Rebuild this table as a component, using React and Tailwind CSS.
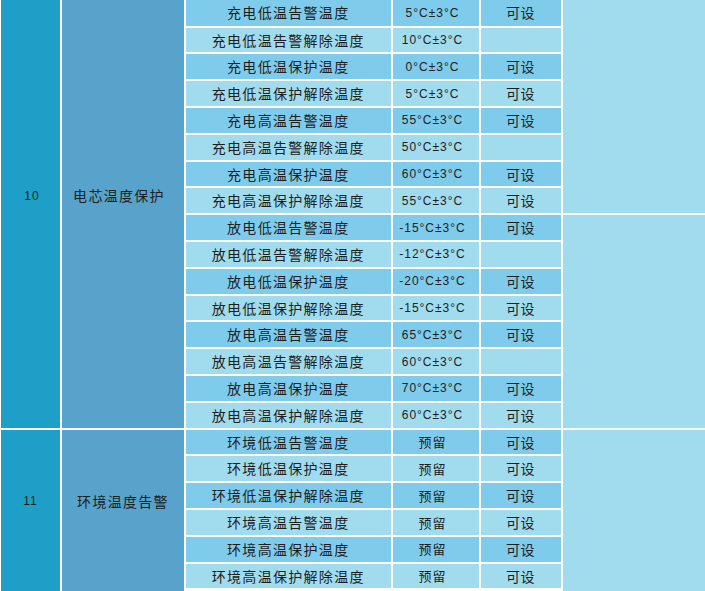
const cjk = "font-['Noto_Sans_CJK_SC','Noto_Sans',sans-serif]";

// parameter rows in display order: name, threshold, settable
const params = [
  ["充电低温告警温度", "5°C±3°C", "可设"],
  ["充电低温告警解除温度", "10°C±3°C", ""],
  ["充电低温保护温度", "0°C±3°C", "可设"],
  ["充电低温保护解除温度", "5°C±3°C", "可设"],
  ["充电高温告警温度", "55°C±3°C", "可设"],
  ["充电高温告警解除温度", "50°C±3°C", ""],
  ["充电高温保护温度", "60°C±3°C", "可设"],
  ["充电高温保护解除温度", "55°C±3°C", "可设"],
  ["放电低温告警温度", "-15°C±3°C", "可设"],
  ["放电低温告警解除温度", "-12°C±3°C", ""],
  ["放电低温保护温度", "-20°C±3°C", "可设"],
  ["放电低温保护解除温度", "-15°C±3°C", "可设"],
  ["放电高温告警温度", "65°C±3°C", "可设"],
  ["放电高温告警解除温度", "60°C±3°C", ""],
  ["放电高温保护温度", "70°C±3°C", "可设"],
  ["放电高温保护解除温度", "60°C±3°C", "可设"],
  ["环境低温告警温度", "预留", "可设"],
  ["环境低温保护温度", "预留", "可设"],
  ["环境低温保护解除温度", "预留", "可设"],
  ["环境高温告警温度", "预留", "可设"],
  ["环境高温保护温度", "预留", "可设"],
  ["环境高温保护解除温度", "预留", "可设"],
];

function ParamRow({ name, value, settable, dark }) {
  const bg = dark ? "bg-[#7fcbeb]" : "bg-[#a1dbee]";
  const isReserved = value === "预留";

  return (
    <>
      <div className={`${bg} ${cjk} flex items-center justify-center text-[14px] tracking-[1.3px] text-[#1d1d1d]`}>
        {name}
      </div>
      <div
        className={
          isReserved
            ? `${bg} ${cjk} flex items-center justify-center pr-[6px] text-[13px] tracking-[1px] text-[#1d1d1d]`
            : `${bg} flex items-center justify-center pr-[6px] font-['Liberation_Sans',Arial,sans-serif] text-[12px] tracking-[1px] text-[#1d1d1d]`
        }
      >
        {value}
      </div>
      <div className={`${bg} ${cjk} flex items-center justify-center text-[14px] tracking-[0.5px] text-[#1d1d1d]`}>
        {settable}
      </div>
    </>
  );
}

export default function App() {
  return (
    <div className="h-[591px] w-[705px] overflow-hidden bg-white pl-[1px]">
      <div className="grid grid-cols-[59px_122px_204.5px_86px_80px_1fr] grid-rows-[25.7px_repeat(22,24.8px)] gap-[2px]">
        <div className="col-start-1 row-[1/17] flex items-center justify-center bg-[#1e9fc7] pb-[36px] pl-[3px] font-['Liberation_Sans',Arial,sans-serif] text-[12px] tracking-[1px] text-[#1d1d1d]">
          10
        </div>
        <div className={`col-start-2 row-[1/17] flex items-center justify-center bg-[#57a3cc] pr-[8px] pb-[36px] ${cjk} text-[14px] tracking-[1.3px] text-[#1d1d1d]`}>
          电芯温度保护
        </div>
        <div className="col-start-6 row-[1/9] bg-[#a1dbee]" />
        <div className="col-start-6 row-[9/17] bg-[#a1dbee]" />

        <div className="col-start-1 row-[17/24] flex items-center justify-center bg-[#1e9fc7] pb-[42px] font-['Liberation_Sans',Arial,sans-serif] text-[12px] tracking-[1px] text-[#1d1d1d]">
          11
        </div>
        <div className={`col-start-2 row-[17/24] flex items-center justify-center bg-[#57a3cc] pb-[42px] ${cjk} text-[14px] tracking-[1.3px] text-[#1d1d1d]`}>
          环境温度告警
        </div>
        <div className="col-start-6 row-[17/24] bg-[#a1dbee]" />

        {params.map(([name, value, settable], index) => (
          <ParamRow key={name} name={name} value={value} settable={settable} dark={index % 2 === 0} />
        ))}
      </div>
    </div>
  );
}
